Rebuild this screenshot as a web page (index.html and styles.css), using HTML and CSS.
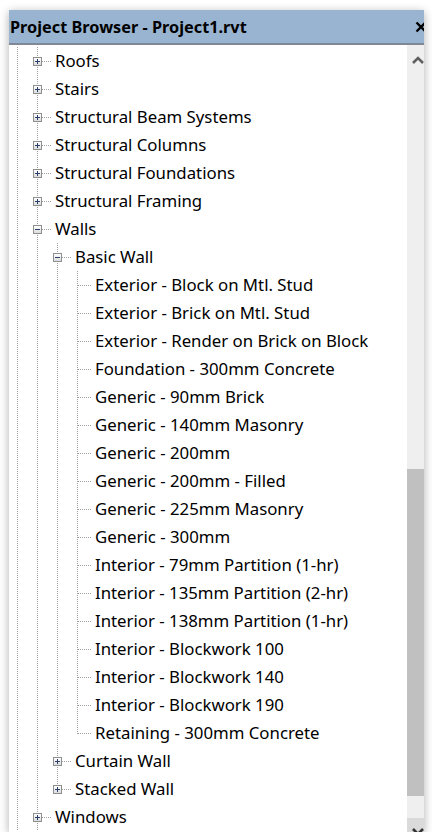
FILE: index.html
```html
<!DOCTYPE html>
<html>
<head>
<meta charset="utf-8">
<link rel="stylesheet" href="styles.css">
</head>
<body>
<div class="window">
  <div class="titlebar">
    <span class="title">Project Browser - Project1.rvt</span>
    <span class="close"><svg width="12" height="12" viewBox="0 0 12 12"><path d="M1.5 1.5 L10.5 10.5 M10.5 1.5 L1.5 10.5" stroke="#000" stroke-width="2.4" fill="none"/></svg></span>
  </div>
  <div class="content">
    <div class="tree">
      <div class="row"><span class="g0"></span><span class="node full"><i class="box plus"></i></span><span class="label">Roofs</span></div>
      <div class="row"><span class="g0"></span><span class="node full"><i class="box plus"></i></span><span class="label">Stairs</span></div>
      <div class="row"><span class="g0"></span><span class="node full"><i class="box plus"></i></span><span class="label">Structural Beam Systems</span></div>
      <div class="row"><span class="g0"></span><span class="node full"><i class="box plus"></i></span><span class="label">Structural Columns</span></div>
      <div class="row"><span class="g0"></span><span class="node full"><i class="box plus"></i></span><span class="label">Structural Foundations</span></div>
      <div class="row"><span class="g0"></span><span class="node full"><i class="box plus"></i></span><span class="label">Structural Framing</span></div>
      <div class="row"><span class="g0"></span><span class="node full"><i class="box minus"></i></span><span class="label">Walls</span></div>
      <div class="row"><span class="g0"></span><span class="g"></span><span class="node full"><i class="box minus"></i></span><span class="label">Basic Wall</span></div>
      <div class="row"><span class="g0"></span><span class="g"></span><span class="g"></span><span class="node full"></span><span class="label">Exterior - Block on Mtl. Stud</span></div>
      <div class="row"><span class="g0"></span><span class="g"></span><span class="g"></span><span class="node full"></span><span class="label">Exterior - Brick on Mtl. Stud</span></div>
      <div class="row"><span class="g0"></span><span class="g"></span><span class="g"></span><span class="node full"></span><span class="label">Exterior - Render on Brick on Block</span></div>
      <div class="row"><span class="g0"></span><span class="g"></span><span class="g"></span><span class="node full"></span><span class="label">Foundation - 300mm Concrete</span></div>
      <div class="row"><span class="g0"></span><span class="g"></span><span class="g"></span><span class="node full"></span><span class="label">Generic - 90mm Brick</span></div>
      <div class="row"><span class="g0"></span><span class="g"></span><span class="g"></span><span class="node full"></span><span class="label">Generic - 140mm Masonry</span></div>
      <div class="row"><span class="g0"></span><span class="g"></span><span class="g"></span><span class="node full"></span><span class="label">Generic - 200mm</span></div>
      <div class="row"><span class="g0"></span><span class="g"></span><span class="g"></span><span class="node full"></span><span class="label">Generic - 200mm - Filled</span></div>
      <div class="row"><span class="g0"></span><span class="g"></span><span class="g"></span><span class="node full"></span><span class="label">Generic - 225mm Masonry</span></div>
      <div class="row"><span class="g0"></span><span class="g"></span><span class="g"></span><span class="node full"></span><span class="label">Generic - 300mm</span></div>
      <div class="row"><span class="g0"></span><span class="g"></span><span class="g"></span><span class="node full"></span><span class="label">Interior - 79mm Partition (1-hr)</span></div>
      <div class="row"><span class="g0"></span><span class="g"></span><span class="g"></span><span class="node full"></span><span class="label">Interior - 135mm Partition (2-hr)</span></div>
      <div class="row"><span class="g0"></span><span class="g"></span><span class="g"></span><span class="node full"></span><span class="label">Interior - 138mm Partition (1-hr)</span></div>
      <div class="row"><span class="g0"></span><span class="g"></span><span class="g"></span><span class="node full"></span><span class="label">Interior - Blockwork 100</span></div>
      <div class="row"><span class="g0"></span><span class="g"></span><span class="g"></span><span class="node full"></span><span class="label">Interior - Blockwork 140</span></div>
      <div class="row"><span class="g0"></span><span class="g"></span><span class="g"></span><span class="node full"></span><span class="label">Interior - Blockwork 190</span></div>
      <div class="row"><span class="g0"></span><span class="g"></span><span class="g"></span><span class="node last"></span><span class="label">Retaining - 300mm Concrete</span></div>
      <div class="row"><span class="g0"></span><span class="g"></span><span class="node full"><i class="box plus"></i></span><span class="label">Curtain Wall</span></div>
      <div class="row"><span class="g0"></span><span class="g"></span><span class="node last"><i class="box plus"></i></span><span class="label">Stacked Wall</span></div>
      <div class="row"><span class="g0"></span><span class="node full"><i class="box plus"></i></span><span class="label">Windows</span></div>
    </div>
    <div class="scrollbar">
      <div class="sb-up"><svg width="12" height="8" viewBox="0 0 12 8"><path d="M1 7 L6 2 L11 7" stroke="#606060" stroke-width="2.6" fill="none"/></svg></div>
      <div class="sb-track1"></div>
      <div class="sb-thumb"></div>
      <div class="sb-track2"></div>
      <div class="sb-down"><svg width="12" height="8" viewBox="0 0 12 8"><path d="M1 1 L6 6 L11 1" stroke="#333" stroke-width="2.6" fill="none"/></svg></div>
    </div>
  </div>
</div>
</body>
</html>
```
FILE: styles.css
```css
html, body {
  margin: 0;
  padding: 0;
  background: #ffffff;
}

.window {
  margin: 10px 0 0 9px;
  width: 415px;
  height: 822px;
  overflow: hidden;
  background: #ffffff;
  box-shadow: 0 2px 9px rgba(0, 0, 0, 0.32);
  display: flex;
  flex-direction: column;
}

.titlebar {
  flex: none;
  height: 33px;
  background: #99b4d1;
  border-bottom: 2px solid #7f8894;
  display: flex;
  align-items: center;
  padding-left: 1px;
}

.title {
  font-family: "Noto Sans", sans-serif;
  font-weight: 700;
  font-size: 16.3px;
  color: #000;
  white-space: nowrap;
}

.close {
  margin-left: auto;
  margin-right: -3px;
  width: 12px;
  height: 12px;
  display: flex;
}

.content {
  flex: none;
  height: 787px;
  display: flex;
}

.tree {
  flex: 1;
  min-width: 0;
  padding-top: 2px;
  font-family: "Noto Sans", sans-serif;
  font-size: 16.8px;
  color: #000;
}

.row {
  display: flex;
  height: 28px;
  align-items: center;
  white-space: nowrap;
}

.g0, .g, .node {
  flex: none;
  height: 28px;
  background-image: repeating-linear-gradient(to bottom, #a0a0a0 0 1px, transparent 1px 2px);
  background-repeat: no-repeat;
}

.g0 {
  width: 18px;
  background-size: 1px 28px;
  background-position: 8px 0;
}

.g {
  width: 20px;
  background-size: 1px 28px;
  background-position: 10px 0;
}

.node {
  width: 28px;
  position: relative;
  background-position: 10px 0;
}

.node.full {
  background-size: 1px 28px;
}

.node.last {
  background-size: 1px 15px;
}

.node::after {
  content: "";
  position: absolute;
  left: 11px;
  top: 14px;
  width: 14px;
  height: 1px;
  background-image: repeating-linear-gradient(to right, #a0a0a0 0 1px, transparent 1px 2px);
}

.box {
  position: absolute;
  left: 6px;
  top: 10px;
  width: 9px;
  height: 9px;
  box-sizing: border-box;
  border: 1px solid #8e8f8f;
  background: linear-gradient(#ffffff, #dcdcdc);
  z-index: 1;
}

.box::before {
  content: "";
  position: absolute;
  left: 1px;
  top: 3px;
  width: 5px;
  height: 1px;
  background: #2b3f6c;
}

.box.plus::after {
  content: "";
  position: absolute;
  left: 3px;
  top: 1px;
  width: 1px;
  height: 5px;
  background: #2b3f6c;
}

.label {
  line-height: 28px;
}

.scrollbar {
  flex: none;
  width: 21px;
  margin-right: -4px;
  display: flex;
  flex-direction: column;
  background: #efefef;
}

.sb-up {
  flex: none;
  height: 25px;
  display: flex;
  justify-content: center;
  align-items: flex-start;
  padding-top: 11px;
  box-sizing: border-box;
}

.sb-track1 {
  flex: none;
  height: 399px;
}

.sb-thumb {
  flex: none;
  height: 327px;
  background: #c0c0c0;
}

.sb-track2 {
  flex: none;
  height: 22px;
}

.sb-down {
  flex: none;
  height: 21px;
  background: #dadada;
  display: flex;
  justify-content: center;
  align-items: flex-start;
  padding-top: 10px;
  box-sizing: border-box;
}
```
